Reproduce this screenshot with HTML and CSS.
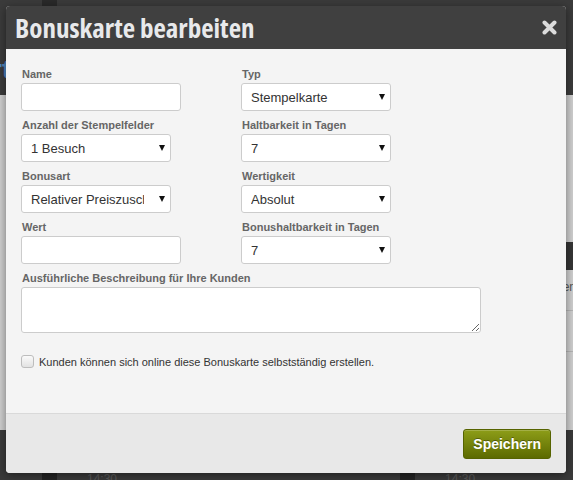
FILE: index.html
```html
<!DOCTYPE html>
<html lang="de">
<head>
<meta charset="utf-8">
<title>Bonuskarte bearbeiten</title>
<link rel="stylesheet" href="styles.css">
</head>
<body>
<div class="page">
  <div class="page-top">
    <span class="pg-tab"></span>
    <span class="pg-heading">Bonuskart</span>
  </div>
  <div class="page-main">
    <div class="pg-side">
      <div class="pg-dark"></div>
      <div class="pg-row">Kunden</div>
      <div class="pg-row"></div>
    </div>
  </div>
  <div class="page-bottom">
    <span class="pg-col"></span>
    <span class="pg-time">14:30</span>
    <span class="pg-col pg-col2"></span>
    <span class="pg-time">14:30</span>
  </div>
</div>

<div class="modal">
  <div class="modal-head">
    <h1 class="modal-title">Bonuskarte bearbeiten</h1>
    <span class="modal-close" aria-label="Schließen">
      <svg width="15" height="15" viewBox="0 0 15 15"><path d="M2.5 2.5 L12.5 12.5 M12.5 2.5 L2.5 12.5" stroke="#dcdcdc" stroke-width="4" stroke-linecap="round"/></svg>
    </span>
  </div>
  <div class="modal-body">
    <div class="grid">
      <div class="field">
        <label>Name</label>
        <input class="input" type="text">
      </div>
      <div class="field">
        <label>Typ</label>
        <div class="select-wrap"><select><option>Stempelkarte</option></select></div>
      </div>
      <div class="field">
        <label>Anzahl der Stempelfelder</label>
        <div class="select-wrap"><select><option>1 Besuch</option></select></div>
      </div>
      <div class="field">
        <label>Haltbarkeit in Tagen</label>
        <div class="select-wrap"><select><option>7</option></select></div>
      </div>
      <div class="field">
        <label>Bonusart</label>
        <div class="select-wrap"><select><option>Relativer Preiszuschlag</option></select></div>
      </div>
      <div class="field">
        <label>Wertigkeit</label>
        <div class="select-wrap"><select><option>Absolut</option></select></div>
      </div>
      <div class="field">
        <label>Wert</label>
        <input class="input" type="text">
      </div>
      <div class="field">
        <label>Bonushaltbarkeit in Tagen</label>
        <div class="select-wrap"><select><option>7</option></select></div>
      </div>
    </div>
    <div class="field desc">
      <label>Ausführliche Beschreibung für Ihre Kunden</label>
      <textarea class="textarea"></textarea>
    </div>
    <label class="check-row">
      <input type="checkbox" class="check">
      <span>Kunden können sich online diese Bonuskarte selbstständig erstellen.</span>
    </label>
  </div>
  <div class="modal-foot">
    <button class="btn-save" type="button">Speichern</button>
  </div>
</div>
</body>
</html>
```

FILE: styles.css
```css
html, body {
  margin: 0;
  padding: 0;
}
body {
  width: 573px;
  height: 480px;
  overflow: hidden;
  position: relative;
  font-family: "Liberation Sans", Arial, sans-serif;
}

/* background page (dimmed) */
.page {
  width: 573px;
  height: 480px;
  display: flex;
  flex-direction: column;
  background: #cfcfcf;
}
.page-top {
  height: 95px;
  background: #3b3b3b;
  display: flex;
  flex-direction: column;
}
.pg-tab {
  display: block;
  margin-left: 42px;
  width: 15px;
  height: 8px;
  background: #2a2a2a;
}
.pg-heading {
  display: block;
  margin-top: 48px;
  margin-left: -118px;
  font-size: 26px;
  font-weight: bold;
  color: #4f87c0;
  line-height: 26px;
}
.page-main {
  flex: 1;
  display: flex;
  justify-content: flex-end;
}
.pg-side {
  width: 40px;
  padding-top: 147px;
}
.pg-dark {
  height: 28px;
  background: #353535;
}
.pg-row {
  height: 40px;
  border-bottom: 1px solid #b5b5b5;
  font-size: 12px;
  line-height: 34px;
  color: #555;
  text-align: right;
  margin-right: -3px;
}
.page-bottom {
  height: 50px;
  background: #3a3a3a;
  display: flex;
  align-items: flex-end;
}
.pg-col {
  align-self: stretch;
  margin-left: 42px;
  width: 15px;
  background: #232323;
}
.pg-col2 {
  margin-left: 283px;
}
.pg-time {
  margin-left: 30px;
  margin-bottom: -6px;
  font-size: 12px;
  color: #5a5a5a;
}

/* modal */
.modal {
  position: absolute;
  left: 6px;
  top: 6px;
  width: 560px;
  background: #f4f4f4;
  border-radius: 4px;
  overflow: hidden;
  box-shadow: 0 2px 10px rgba(0, 0, 0, 0.45);
}
.modal-head {
  height: 43px;
  background: #404040;
  display: flex;
  align-items: center;
  justify-content: space-between;
  padding: 0 9px 0 9px;
}
.modal-title {
  margin: 0;
  font-family: "Open Sans", "Liberation Sans", sans-serif;
  font-stretch: 75%;
  font-size: 27px;
  font-weight: 700;
  line-height: 43px;
  color: #e8e9eb;
}
.modal-close {
  display: flex;
  width: 15px;
  height: 15px;
}
.modal-body {
  height: 364px;
  box-sizing: border-box;
  padding: 18px 15px 0;
}
.grid {
  display: grid;
  grid-template-columns: 220px 220px;
  row-gap: 7px;
}
.field label {
  display: block;
  font-size: 11px;
  font-weight: bold;
  line-height: 14px;
  margin-bottom: 2px;
  padding-left: 1px;
  color: #666;
}
.input {
  display: block;
  width: 160px;
  height: 28px;
  box-sizing: border-box;
  margin: 0;
  border: 1px solid #cccccc;
  border-radius: 3px;
  background: #fff;
}
.select-wrap {
  position: relative;
  width: 150px;
  height: 28px;
}
.select-wrap select {
  appearance: none;
  -webkit-appearance: none;
  display: block;
  width: 150px;
  height: 28px;
  box-sizing: border-box;
  margin: 0;
  border: 1px solid #cccccc;
  border-radius: 3px;
  background: #fff;
  font-family: "Liberation Sans", Arial, sans-serif;
  font-size: 13px;
  color: #333;
  padding: 0 26px 0 9px;
}
.select-wrap::after {
  content: "";
  position: absolute;
  right: 6px;
  top: 11px;
  border-left: 3px solid transparent;
  border-right: 3px solid transparent;
  border-top: 6px solid #111;
}
.desc {
  margin-top: 7px;
}
.textarea {
  display: block;
  width: 460px;
  height: 46px;
  box-sizing: border-box;
  margin: 0;
  border: 1px solid #cccccc;
  border-radius: 3px;
  background: #fff;
}
.check-row {
  display: flex;
  align-items: center;
  gap: 5px;
  margin-top: 22px;
  font-size: 11px;
  color: #333;
}
.check {
  appearance: none;
  -webkit-appearance: none;
  margin: 0;
  width: 13px;
  height: 13px;
  box-sizing: border-box;
  border: 1px solid #bdbdbd;
  border-radius: 3px;
  background: linear-gradient(#fafafa, #e2e2e2);
}
.modal-foot {
  height: 59px;
  border-top: 1px solid #d9d9d9;
  background: #e8e8e8;
  display: flex;
  align-items: center;
  justify-content: flex-end;
  padding-right: 15px;
}
.btn-save {
  height: 30px;
  padding: 0 9px;
  border: 1px solid #566300;
  border-radius: 3px;
  background: linear-gradient(#8d9d18, #5c6a00);
  color: #fff;
  font-family: "Liberation Sans", Arial, sans-serif;
  font-size: 14px;
  font-weight: bold;
  text-shadow: 0 -1px 0 rgba(0, 0, 0, 0.35);
  box-shadow: inset 0 1px 0 rgba(255, 255, 255, 0.2);
}
```
